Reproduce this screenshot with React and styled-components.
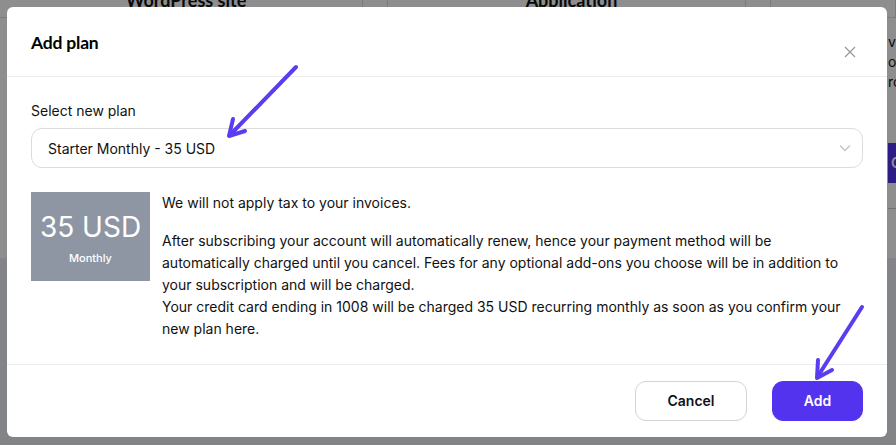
import React from "react";
import styled, { createGlobalStyle } from "styled-components";

const Global = createGlobalStyle`
  html, body { margin: 0; padding: 0; }
  body {
    width: 896px; height: 445px; overflow: hidden;
    font-family: Inter, "Noto Sans", sans-serif;
    color: #111;
    background: #ebedf2;
  }
  * { box-sizing: border-box; }
`;

/* ---------- background page ---------- */
const Page = styled.div`
  position: relative;
  width: 896px;
  height: 445px;
  overflow: hidden;
  background: #ebedf2;
`;
const TopCard = styled.div`
  height: 258px;
  background: #fff;
  display: flex;
  flex-direction: column;
`;
const HeadRow = styled.div`
  display: grid;
  grid-template-columns: 363px 25px 358px 25px 1fr;
  height: 18px;
  border-bottom: 1px solid #ddd;
`;
const HeadCell = styled.div`
  font-family: "Lato", sans-serif;
  font-weight: 700;
  font-size: 18px;
  line-height: 18px;
  margin-top: -9px;
  padding-left: 10px;
  text-align: center;
  border-right: 1px solid #ddd;
`;
const SideText = styled.div`
  margin-left: 888px;
  margin-top: 14px;
  font-size: 14px;
  line-height: 20px;
  color: #111;
  white-space: nowrap;
`;
const SideButton = styled.div`
  margin-left: 888px;
  margin-top: 51px;
  width: 80px;
  height: 40px;
  background: #5333ed;
  color: #fff;
  font-size: 14px;
  font-weight: 600;
  line-height: 40px;
  padding-left: 3px;
`;
const SideLine = styled.div`
  margin-left: 888px;
  margin-top: 25px;
  border-top: 1px solid #ccc;
`;
const Overlay = styled.div`
  position: absolute;
  inset: 0;
  background: rgba(0, 0, 0, 0.443);
`;

/* ---------- modal ---------- */
const Modal = styled.div`
  position: absolute;
  left: 7px;
  top: 7px;
  width: 880px;
  height: 430px;
  background: #fff;
  border-radius: 6px;
  display: flex;
  flex-direction: column;
`;
const Header = styled.div`
  height: 70px;
  border-bottom: 1px solid #ececec;
  display: flex;
  justify-content: space-between;
  padding: 0 31px 0 24px;
`;
const Title = styled.h2`
  margin: 0;
  padding-top: 25px;
  font-family: "Lato", sans-serif;
  font-weight: 700;
  font-size: 17.5px;
  line-height: 22px;
  color: #000;
  letter-spacing: -0.2px;
`;
const Close = styled.button`
  border: 0;
  background: none;
  padding: 0;
  margin-top: 39px;
  width: 12px;
  height: 12px;
  display: flex;
  cursor: pointer;
`;
const Body = styled.div`
  flex: 1;
  padding: 24px 24px 0 24px;
  display: flex;
  flex-direction: column;
`;
const Label = styled.label`
  font-size: 14px;
  line-height: 20px;
  color: #111;
  margin-bottom: 7px;
`;
const Select = styled.div`
  height: 40px;
  border: 1px solid #dcdcdc;
  border-radius: 11px;
  display: flex;
  align-items: center;
  justify-content: space-between;
  padding: 0 10px 0 16px;
  font-size: 14px;
  color: #111;
`;
const Info = styled.div`
  display: flex;
  gap: 12px;
  margin-top: 24px;
`;
const PriceBox = styled.div`
  flex: 0 0 119px;
  height: 89px;
  background: #8f96a3;
  color: #fff;
  display: flex;
  flex-direction: column;
  align-items: center;
  padding-top: 19px;
`;
const Price = styled.div`
  font-size: 28px;
  line-height: 32px;
  font-weight: 400;
`;
const Period = styled.div`
  font-size: 11px;
  line-height: 14px;
  margin-top: 8px;
  font-weight: 500;
`;
const TextCol = styled.div`
  flex: 0 1 686px;
  max-width: 686px;
  font-size: 14px;
  line-height: 22px;
  color: #111;
`;
const Para = styled.p`
  margin: 0 0 ${(p) => p.$mb || 0}px 0;
`;
const Footer = styled.div`
  height: 73px;
  border-top: 1px solid #ececec;
  display: flex;
  justify-content: flex-end;
  gap: 25px;
  padding: 16px 24px 0 0;
`;
const Button = styled.button`
  height: 40px;
  width: ${(p) => p.$w}px;
  border-radius: 11px;
  font-family: Inter, sans-serif;
  font-size: 14px;
  font-weight: 600;
  line-height: 18px;
  padding-bottom: 2px;
  cursor: pointer;
  border: 1px solid ${(p) => (p.$primary ? "#5333ed" : "#d4d4d4")};
  background: ${(p) => (p.$primary ? "#5333ed" : "#fff")};
  color: ${(p) => (p.$primary ? "#fff" : "#111")};
`;
const Arrow = styled.svg`
  position: absolute;
  left: 0;
  top: 0;
  pointer-events: none;
`;

export default function App() {
  return (
    <>
      <Global />
      <Page>
        <TopCard>
          <HeadRow>
            <HeadCell>WordPress site</HeadCell>
            <HeadCell />
            <HeadCell>Application</HeadCell>
            <HeadCell />
            <HeadCell />
          </HeadRow>
          <SideText>
            v<br />o<br />ro
          </SideText>
          <SideButton>C</SideButton>
          <SideLine />
        </TopCard>
        <Overlay />
        <Modal>
          <Header>
            <Title>Add plan</Title>
            <Close aria-label="Close">
              <svg width="12" height="12" viewBox="0 0 12 12">
                <path d="M1 1L11 11M11 1L1 11" stroke="#9a9a9a" strokeWidth="1.3" fill="none" />
              </svg>
            </Close>
          </Header>
          <Body>
            <Label>Select new plan</Label>
            <Select>
              <span>Starter Monthly - 35 USD</span>
              <svg width="14" height="14" viewBox="0 0 14 14">
                <path d="M2 4.5L7 9.5L12 4.5" stroke="#c4c4c4" strokeWidth="1.3" fill="none" />
              </svg>
            </Select>
            <Info>
              <PriceBox>
                <Price>35 USD</Price>
                <Period>Monthly</Period>
              </PriceBox>
              <TextCol>
                <Para $mb={16}>We will not apply tax to your invoices.</Para>
                <Para>
                  After subscribing your account will automatically renew, hence your payment method will be
                  automatically charged until you cancel. Fees for any optional add-ons you choose will be in addition to
                  your subscription and will be charged.
                  <br />
                  Your credit card ending in 1008 will be charged 35 USD recurring monthly as soon as you confirm your
                  new plan here.
                </Para>
              </TextCol>
            </Info>
          </Body>
          <Footer>
            <Button $w={112}>Cancel</Button>
            <Button $w={91} $primary>
              Add
            </Button>
          </Footer>
        </Modal>
        <Arrow width="896" height="445" viewBox="0 0 896 445">
          <g stroke="#5a3cf1" strokeWidth="4" strokeLinecap="round" strokeLinejoin="round" fill="none">
            <path d="M296 67L231 134" />
            <path d="M233 119L229 136L245 131" />
            <path d="M862 307L818 376" />
            <path d="M818 360L817 378L832 370" />
          </g>
        </Arrow>
      </Page>
    </>
  );
}
